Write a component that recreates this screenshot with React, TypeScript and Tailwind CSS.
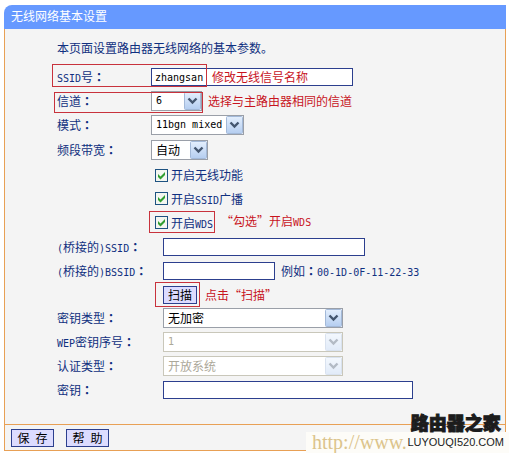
import type { ReactNode } from "react";

const sans = "font-['Noto_Sans_CJK_SC',sans-serif]";
const border = "border border-[#2c3f8e]";
const button = "h-[18px] border border-[#2c3f8e] bg-[#dcdcff] text-xs leading-4 text-black";

// half-width latin, 6px per letter next to the 12px chinese
function Latin({ children }: { children: ReactNode }) {
  return <span className="font-['DejaVu_Sans_Mono',monospace] text-[10px]">{children}</span>;
}

function Colon() {
  return <span className="font-['Noto_Sans_CJK_TC',sans-serif] font-bold">：</span>;
}

type RowProps = {
  label?: ReactNode;
  htmlFor?: string;
  wide?: boolean;
  height?: string;
  children: ReactNode;
};

function Row({ label, htmlFor, wide, height = "h-6", children }: RowProps) {
  return (
    <div className={`relative flex items-center ${height}`}>
      <div className={`shrink-0 ${wide ? "w-[106px]" : "w-[94px]"}`}>
        {label && (
          <label htmlFor={htmlFor} className="whitespace-nowrap">
            {label}
            <Colon />
          </label>
        )}
      </div>
      {children}
    </div>
  );
}

type SelectProps = {
  id: string;
  value: string;
  width: string;
  latin?: boolean;
  disabled?: boolean;
};

function Select({ id, value, width, latin, disabled }: SelectProps) {
  const font = latin ? "font-['DejaVu_Sans_Mono',monospace] text-[10px]" : "text-xs";
  const color = disabled
    ? "border-[#c9c7ba] bg-white text-[#aca899] opacity-100"
    : "border-[#9a9fa8] bg-white text-black";
  return (
    <div className={`relative shrink-0 ${width}`}>
      <select
        id={id}
        disabled={disabled}
        defaultValue={value}
        className={`block h-5 w-full appearance-none border pl-1 ${font} ${color}`}
      >
        <option>{value}</option>
      </select>
      <svg
        className={`pointer-events-none absolute top-px right-px ${disabled ? "opacity-40" : ""}`}
        width="17"
        height="18"
        viewBox="0 0 17 18"
      >
        <defs>
          <linearGradient id={`${id}-fill`} x1="0" y1="0" x2="0" y2="1">
            <stop offset="0" stopColor="#e4effd" />
            <stop offset="1" stopColor="#b4cdf0" />
          </linearGradient>
        </defs>
        <rect x="0.5" y="0.5" width="16" height="17" rx="1" fill={`url(#${id}-fill)`} stroke="#a3b9d8" />
        <path d="M4.500 6.500l4 4 4-4" fill="none" stroke="#44566f" strokeWidth="2.4" />
      </svg>
    </div>
  );
}

function Check({ id, children }: { id: string; children: ReactNode }) {
  return (
    <span className="flex items-center pl-1">
      <span className="relative flex">
        <input
          id={id}
          type="checkbox"
          defaultChecked
          className="peer size-[13px] appearance-none border border-[#1d5281] bg-[#f3f6f0]"
        />
        <svg className="pointer-events-none absolute inset-0 hidden peer-checked:block" width="13" height="13" viewBox="0 0 13 13">
          <path d="M3 5v3l2.500 2.500L10 6V3L5.500 7.500z" fill="#2f9e2f" />
        </svg>
      </span>
      <label htmlFor={id} className="whitespace-nowrap pl-[3px]">
        {children}
      </label>
    </span>
  );
}

function Mark({ place }: { place: string }) {
  return <span className={`pointer-events-none absolute border border-[#c8323c] ${place}`} />;
}

export default function App() {
  return (
    <main className={`relative bg-white pt-[5px] pr-[3px] pb-[3px] pl-1 text-xs text-[#103080] ${sans}`}>
      <h1 className="h-6 rounded-tl-lg bg-[#6699ff] pl-[7px] leading-[22px] text-white">无线网络基本设置</h1>
      <form onSubmit={(e) => e.preventDefault()}>
        <div className="border-x border-[#e8a055] bg-[#f4f4f4] pt-[10px] pb-[22px] pl-[52px]">
          <p className="h-[26px] leading-[18px]">本页面设置路由器无线网络的基本参数。</p>

          <Row label={<><Latin>SSID</Latin>号</>} htmlFor="ssid">
            <input
              id="ssid"
              defaultValue="zhangsan"
              className={`h-[18px] w-[202px] bg-white px-[3px] font-['DejaVu_Sans_Mono',monospace] text-[10px] text-black ${border}`}
            />
            <Mark place="-left-[5px] -top-px h-[23px] w-[155px]" />
            <span className="pointer-events-none absolute left-[155px] text-[#c8141e]">修改无线信号名称</span>
          </Row>
          <Row label="信道" htmlFor="channel">
            <Select id="channel" value="6" width="w-[51px]" latin />
            <Mark place="-left-[3px] top-[3px] h-[21px] w-[149px]" />
            <span className="pl-1.5 text-[#c8141e]">选择与主路由器相同的信道</span>
          </Row>
          <Row label="模式" htmlFor="mode">
            <Select id="mode" value="11bgn mixed" width="w-[93px]" latin />
          </Row>
          <Row label="频段带宽" htmlFor="band" height="h-[26px]">
            <Select id="band" value="自动" width="w-[57px]" />
          </Row>
          <Row>
            <Check id="radio">开启无线功能</Check>
          </Row>
          <Row>
            <Check id="broadcast">
              开启<Latin>SSID</Latin>广播
            </Check>
          </Row>
          <Row>
            <Check id="wds">
              开启<Latin>WDS</Latin>
            </Check>
            <Mark place="left-[92px] top-0 h-[22px] w-[66px]" />
            <span className="pl-2 pb-1 text-[#c8141e]">
              “勾选”开启<Latin>WDS</Latin>
            </span>
          </Row>
          <Row label={<><Latin>(</Latin>桥接的<Latin>)SSID</Latin></>} htmlFor="bridge-ssid" wide>
            <input id="bridge-ssid" className={`h-[18px] w-[202px] bg-white px-[3px] ${border}`} />
          </Row>
          <Row label={<><Latin>(</Latin>桥接的<Latin>)BSSID</Latin></>} htmlFor="bridge-bssid" wide>
            <input id="bridge-bssid" className={`h-[18px] w-[112px] bg-white px-[3px] ${border}`} />
            <span className="pl-1.5">
              例如<Colon />
              <Latin>00-1D-0F-11-22-33</Latin>
            </span>
          </Row>
          <Row wide height="h-[23px]">
            <button type="button" className={`w-[34px] ${button}`}>扫描</button>
            <Mark place="left-[98px] -top-px h-[25px] w-[45px]" />
            <span className="pl-2 text-[#c8141e]">点击“扫描”</span>
          </Row>
          <Row label="密钥类型" htmlFor="key-type" wide>
            <Select id="key-type" value="无加密" width="w-[180px]" />
          </Row>
          <Row label={<><Latin>WEP</Latin>密钥序号</>} htmlFor="wep-index" wide>
            <Select id="wep-index" value="1" width="w-[180px]" latin disabled />
          </Row>
          <Row label="认证类型" htmlFor="auth" wide>
            <Select id="auth" value="开放系统" width="w-[180px]" disabled />
          </Row>
          <Row label="密钥" htmlFor="key" wide>
            <input id="key" className={`h-[18px] w-[250px] bg-white px-[3px] ${border}`} />
          </Row>
        </div>
        <div className="flex h-[27px] items-center gap-3 border border-[#e8a055] bg-[#f4f4f4] pl-1.5">
          <button type="submit" className={`w-[43px] ${button}`}>
            保<Latin> </Latin>存
          </button>
          <button type="button" className={`w-[43px] ${button}`}>
            帮<Latin> </Latin>助
          </button>
        </div>
      </form>

      <div className="absolute right-0 bottom-0 h-[22px] w-[203px] bg-[#fdfcf8] pl-1.5 font-['Liberation_Serif',serif] text-xl leading-5 text-[#dcc48c]">
        http://www.
      </div>
      <div className="absolute right-[5px] bottom-[6px] flex flex-col items-center gap-1 text-[#1c1c1c]">
        <strong className="text-lg leading-5 font-black [-webkit-text-stroke:1px_#1c1c1c]">路由器之家</strong>
        <span className="font-['Liberation_Sans',sans-serif] text-[11px] leading-3">LUYOUQI520.COM</span>
      </div>
    </main>
  );
}
